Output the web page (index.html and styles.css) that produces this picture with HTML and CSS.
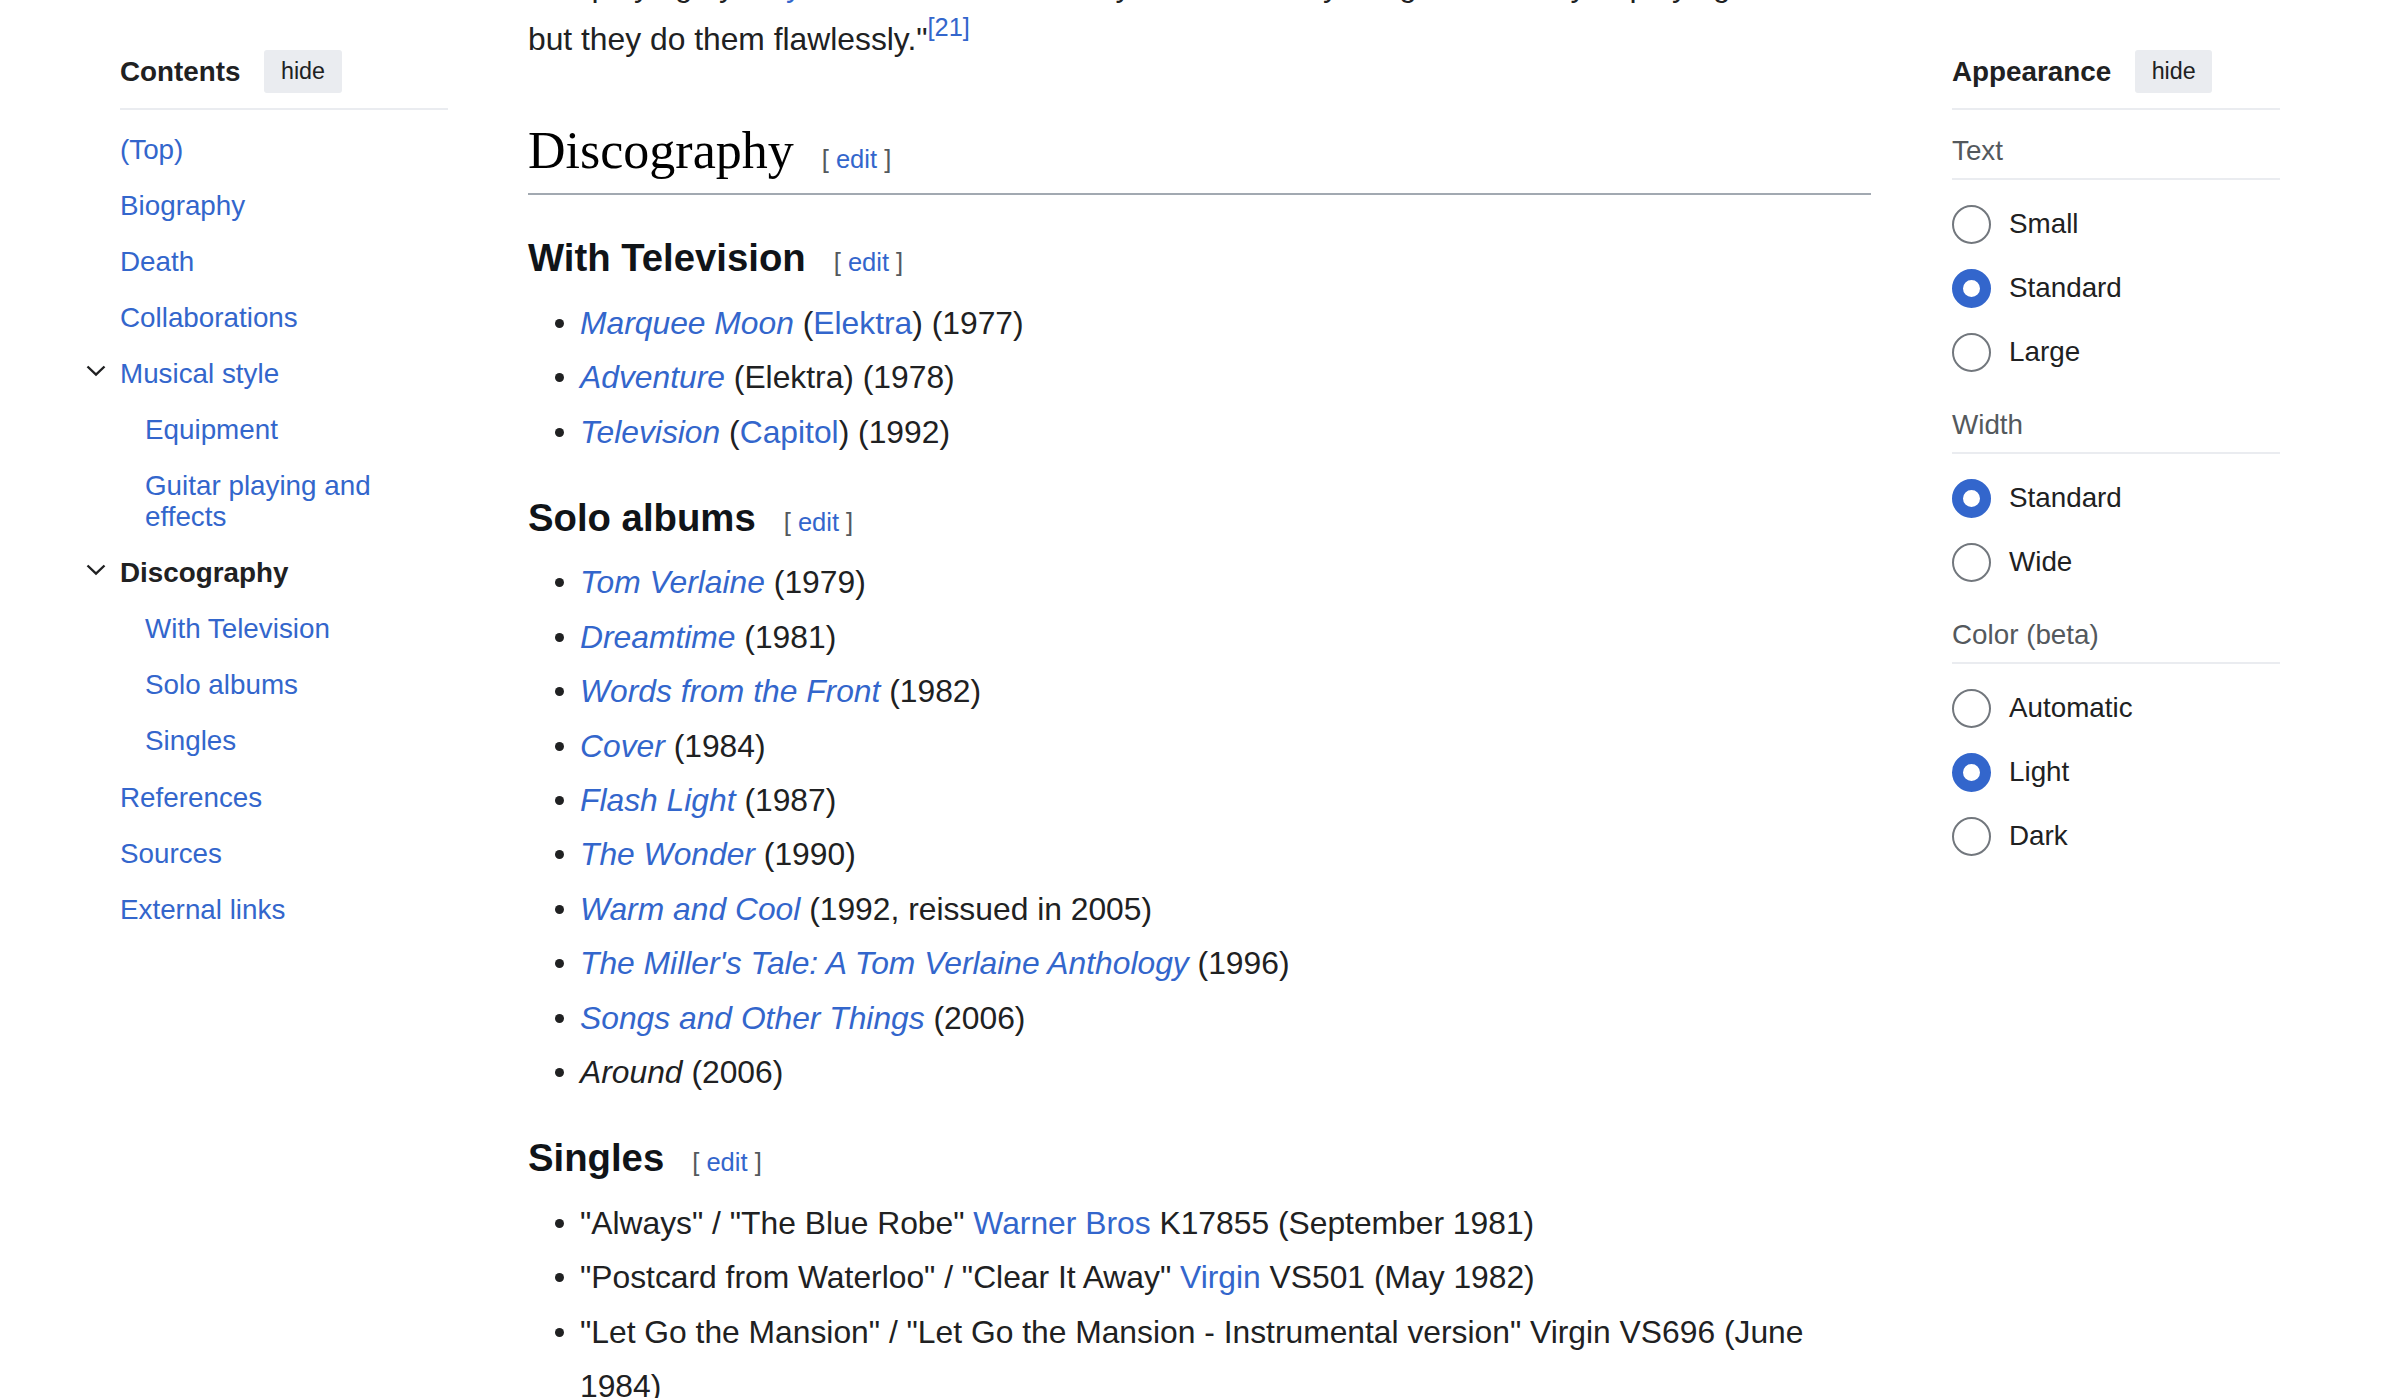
FILE: index.html
```html
<!DOCTYPE html>
<html lang="en">
<head>
<meta charset="utf-8">
<title>Tom Verlaine - Discography</title>
<link rel="stylesheet" href="styles.css">
</head>
<body>
<div class="page">
  <nav class="toc">
    <div class="panel-head">
      <span class="panel-title">Contents</span>
      <button class="hide-btn">hide</button>
    </div>
    <ul class="toc-list">
      <li class="toc-item"><a href="#">(Top)</a></li>
      <li class="toc-item"><a href="#">Biography</a></li>
      <li class="toc-item"><a href="#">Death</a></li>
      <li class="toc-item"><a href="#">Collaborations</a></li>
      <li class="toc-item has-sub">
        <span class="toc-toggle"><svg width="20" height="12" viewBox="0 0 20 12"><path d="M1.5 1.5 L10 9.5 L18.5 1.5" fill="none" stroke="#202122" stroke-width="2.4"/></svg></span><a href="#">Musical style</a>
        <ul class="toc-sub">
          <li class="toc-item"><a href="#">Equipment</a></li>
          <li class="toc-item"><a href="#">Guitar playing and effects</a></li>
        </ul>
      </li>
      <li class="toc-item has-sub">
        <span class="toc-toggle"><svg width="20" height="12" viewBox="0 0 20 12"><path d="M1.5 1.5 L10 9.5 L18.5 1.5" fill="none" stroke="#202122" stroke-width="2.4"/></svg></span><a href="#" class="active">Discography</a>
        <ul class="toc-sub">
          <li class="toc-item"><a href="#">With Television</a></li>
          <li class="toc-item"><a href="#">Solo albums</a></li>
          <li class="toc-item"><a href="#">Singles</a></li>
        </ul>
      </li>
      <li class="toc-item"><a href="#">References</a></li>
      <li class="toc-item"><a href="#">Sources</a></li>
      <li class="toc-item"><a href="#">External links</a></li>
    </ul>
  </nav>

  <main class="content">
    <p class="lead"><span class="lead-first">The playing by <a href="#">Lloyd</a> was described: "They don't do many things when they're playing,</span><br>but they do them flawlessly."<sup class="ref"><a href="#">[21]</a></sup></p>

    <h2 class="h2">Discography<span class="editsection"><span class="br">[</span> <a href="#">edit</a> <span class="br">]</span></span></h2>

    <h3 class="h3">With Television<span class="editsection"><span class="br">[</span> <a href="#">edit</a> <span class="br">]</span></span></h3>
    <ul class="list">
      <li><i><a href="#">Marquee Moon</a></i> (<a href="#">Elektra</a>) (1977)</li>
      <li><i><a href="#">Adventure</a></i> (Elektra) (1978)</li>
      <li><i><a href="#">Television</a></i> (<a href="#">Capitol</a>) (1992)</li>
    </ul>

    <h3 class="h3">Solo albums<span class="editsection"><span class="br">[</span> <a href="#">edit</a> <span class="br">]</span></span></h3>
    <ul class="list">
      <li><i><a href="#">Tom Verlaine</a></i> (1979)</li>
      <li><i><a href="#">Dreamtime</a></i> (1981)</li>
      <li><i><a href="#">Words from the Front</a></i> (1982)</li>
      <li><i><a href="#">Cover</a></i> (1984)</li>
      <li><i><a href="#">Flash Light</a></i> (1987)</li>
      <li><i><a href="#">The Wonder</a></i> (1990)</li>
      <li><i><a href="#">Warm and Cool</a></i> (1992, reissued in 2005)</li>
      <li><i><a href="#">The Miller's Tale: A Tom Verlaine Anthology</a></i> (1996)</li>
      <li><i><a href="#">Songs and Other Things</a></i> (2006)</li>
      <li><i>Around</i> (2006)</li>
    </ul>

    <h3 class="h3">Singles<span class="editsection"><span class="br">[</span> <a href="#">edit</a> <span class="br">]</span></span></h3>
    <ul class="list">
      <li>"Always" / "The Blue Robe" <a href="#">Warner Bros</a> K17855 (September 1981)</li>
      <li>"Postcard from Waterloo" / "Clear It Away" <a href="#">Virgin</a> VS501 (May 1982)</li>
      <li>"Let Go the Mansion" / "Let Go the Mansion - Instrumental version" Virgin VS696 (June 1984)</li>
    </ul>
  </main>

  <aside class="appearance">
    <div class="panel-head">
      <span class="panel-title">Appearance</span>
      <button class="hide-btn">hide</button>
    </div>
    <div class="group">
      <div class="group-label">Text</div>
      <label class="radio"><span class="dot"></span>Small</label>
      <label class="radio"><span class="dot on"></span>Standard</label>
      <label class="radio"><span class="dot"></span>Large</label>
    </div>
    <div class="group">
      <div class="group-label">Width</div>
      <label class="radio"><span class="dot on"></span>Standard</label>
      <label class="radio"><span class="dot"></span>Wide</label>
    </div>
    <div class="group">
      <div class="group-label">Color (beta)</div>
      <label class="radio"><span class="dot"></span>Automatic</label>
      <label class="radio"><span class="dot on"></span>Light</label>
      <label class="radio"><span class="dot"></span>Dark</label>
    </div>
  </aside>
</div>
</body>
</html>
```

FILE: styles.css
```css
* { box-sizing: border-box; }
html, body {
  margin: 0;
  padding: 0;
  background: #ffffff;
  overflow: hidden;
}
body {
  font-family: "Liberation Sans", Arial, sans-serif;
  font-size: 27.8px;
  color: #202122;
}
a { color: #3366cc; text-decoration: none; }

.page {
  display: flex;
  align-items: flex-start;
  padding-left: 120px;
  height: 1398px;
  overflow: hidden;
}

/* side panels */
.toc, .appearance {
  width: 328px;
  flex: none;
  padding-top: 50px;
}
.toc { margin-right: 80px; }
.appearance { margin-left: 81px; }

.panel-head {
  display: flex;
  align-items: center;
  gap: 24px;
  padding-bottom: 15px;
  border-bottom: 2px solid #eaecf0;
}
.panel-title {
  font-weight: bold;
  line-height: 31px;
  color: #202122;
}
.hide-btn {
  font-family: "Liberation Sans", Arial, sans-serif;
  font-size: 23.3px;
  color: #202122;
  background: #eaecf0;
  border: none;
  border-radius: 3px;
  height: 43px;
  padding: 0 16.5px;
  line-height: 43px;
}

.toc-list {
  list-style: none;
  margin: 11px 0 0 0;
  padding: 0;
}
.toc-item {
  line-height: 31px;
  padding: 12.55px 0;
}
.toc-sub {
  list-style: none;
  margin: 12.55px 0 -12.55px 25px;
  padding: 0;
}
.toc-toggle {
  display: inline-block;
  width: 20px;
  margin-left: -34px;
  margin-right: 14px;
  vertical-align: 6px;
}
.toc-toggle svg { display: block; }
.toc a.active {
  color: #202122;
  font-weight: bold;
}

/* content */
.content {
  width: 1343px;
  flex: none;
  font-size: 31.8px;
}
.lead {
  margin: -42.5px 0 0 0;
  line-height: 54.4px;
}
.lead-first { white-space: nowrap; }
.ref {
  font-size: 0.8em;
  line-height: 1;
  vertical-align: 14px;
}
.h2 {
  font-family: "Liberation Serif", "Times New Roman", serif;
  font-weight: normal;
  font-size: 52px;
  line-height: 66px;
  color: #000;
  margin: 52px 0 0 0;
  padding-bottom: 1px;
  border-bottom: 2px solid #a2a9b1;
}
.h3 {
  font-size: 38.3px;
  font-weight: bold;
  line-height: 50.4px;
  color: #101418;
  margin: 34px 0 8px 0;
}
.h2 + .h3 { margin-top: 38px; }
.editsection {
  font-family: "Liberation Sans", Arial, sans-serif;
  font-size: 25.5px;
  font-weight: normal;
  margin-left: 28px;
  color: #54595d;
}
.editsection .br { color: #54595d; }

.list {
  list-style: none;
  margin: 0;
  padding: 0 0 0 52px;
  line-height: 54.4px;
}
.list li::before {
  content: "";
  display: inline-block;
  width: 9px;
  height: 9px;
  border-radius: 50%;
  background: #202122;
  margin-left: -25px;
  margin-right: 16px;
  vertical-align: 6px;
}

/* appearance */
.group-label {
  color: #54595d;
  line-height: 31px;
  margin-top: 25px;
  padding-bottom: 12px;
  border-bottom: 2px solid #eaecf0;
  margin-bottom: 12px;
}
.radio {
  display: flex;
  align-items: center;
  height: 64px;
  gap: 18px;
  color: #202122;
}
.dot {
  width: 39px;
  height: 39px;
  border-radius: 50%;
  border: 2px solid #72777d;
  background: #fff;
  flex: none;
}
.dot.on {
  border: 11px solid #3366cc;
}
```
